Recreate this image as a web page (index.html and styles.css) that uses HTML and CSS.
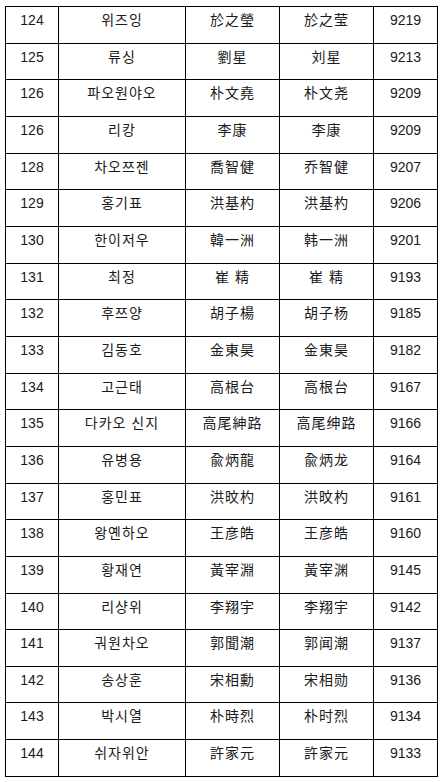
FILE: index.html
```html
<!DOCTYPE html>
<html lang="ko">
<head>
<meta charset="utf-8">
<link rel="stylesheet" href="styles.css">
</head>
<body>
<table class="rank">
<colgroup><col class="c1"><col class="c2"><col class="c3"><col class="c4"><col class="c5"></colgroup>
<tbody>
<tr><td>124</td><td>위즈잉</td><td>於之瑩</td><td>於之莹</td><td>9219</td></tr>
<tr><td>125</td><td>류싱</td><td>劉星</td><td>刘星</td><td>9213</td></tr>
<tr><td>126</td><td>파오원야오</td><td>朴文堯</td><td>朴文尧</td><td>9209</td></tr>
<tr><td>126</td><td>리캉</td><td>李康</td><td>李康</td><td>9209</td></tr>
<tr><td>128</td><td>차오쯔젠</td><td>喬智健</td><td>乔智健</td><td>9207</td></tr>
<tr><td>129</td><td>홍기표</td><td>洪基杓</td><td>洪基杓</td><td>9206</td></tr>
<tr><td>130</td><td>한이저우</td><td>韓一洲</td><td>韩一洲</td><td>9201</td></tr>
<tr><td>131</td><td>최정</td><td>崔 精</td><td>崔 精</td><td>9193</td></tr>
<tr><td>132</td><td>후쯔양</td><td>胡子楊</td><td>胡子杨</td><td>9185</td></tr>
<tr><td>133</td><td>김동호</td><td>金東昊</td><td>金東昊</td><td>9182</td></tr>
<tr><td>134</td><td>고근태</td><td>高根台</td><td>高根台</td><td>9167</td></tr>
<tr><td>135</td><td>다카오 신지</td><td>高尾紳路</td><td>高尾绅路</td><td>9166</td></tr>
<tr><td>136</td><td>유병용</td><td>兪炳龍</td><td>兪炳龙</td><td>9164</td></tr>
<tr><td>137</td><td>홍민표</td><td>洪旼杓</td><td>洪旼杓</td><td>9161</td></tr>
<tr><td>138</td><td>왕옌하오</td><td>王彦皓</td><td>王彦皓</td><td>9160</td></tr>
<tr><td>139</td><td>황재연</td><td>黃宰淵</td><td>黃宰渊</td><td>9145</td></tr>
<tr><td>140</td><td>리샹위</td><td>李翔宇</td><td>李翔宇</td><td>9142</td></tr>
<tr><td>141</td><td>궈원차오</td><td>郭聞潮</td><td>郭闻潮</td><td>9137</td></tr>
<tr><td>142</td><td>송상훈</td><td>宋相勳</td><td>宋相勋</td><td>9136</td></tr>
<tr><td>143</td><td>박시열</td><td>朴時烈</td><td>朴时烈</td><td>9134</td></tr>
<tr><td>144</td><td>쉬자위안</td><td>許家元</td><td>許家元</td><td>9133</td></tr>
</tbody>
</table>
</body>
</html>
```
FILE: styles.css
```css
html, body {
  margin: 0;
  padding: 0;
  background: #ffffff;
}
body {
  padding: 6px 0 0 5px;
  font-family: "Liberation Sans", "Noto Sans CJK KR", sans-serif;
  font-size: 14px;
  color: #1a1a1a;
}
.rank {
  border-collapse: collapse;
  table-layout: fixed;
  width: 432px;
}
.c1 { width: 53px; }
.c2 { width: 127px; }
.c3 { width: 94px; }
.c4 { width: 94px; }
.c5 { width: 64px; }
.rank td {
  border: 1px solid #000000;
  height: 36.67px;
  box-sizing: border-box;
  padding: 5px 2px 0;
  vertical-align: top;
  text-align: center;
  line-height: 16px;
  white-space: nowrap;
}
.rank td:nth-child(2),
.rank td:nth-child(3),
.rank td:nth-child(4) {
  letter-spacing: 1px;
}
```
